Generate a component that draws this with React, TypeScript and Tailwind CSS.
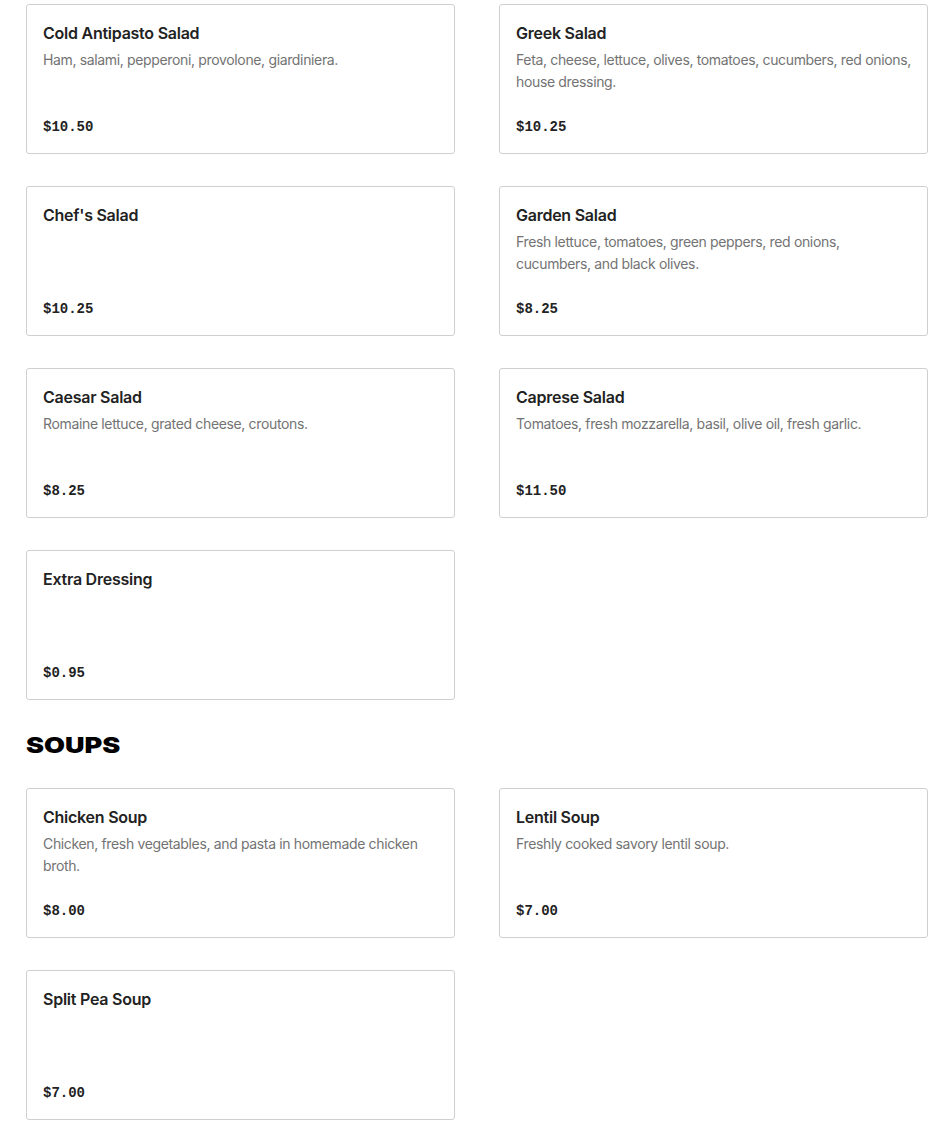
import React from "react";

type Item = { name: string; desc?: string; price: string };

const salads: Item[] = [
  { name: "Cold Antipasto Salad", desc: "Ham, salami, pepperoni, provolone, giardiniera.", price: "$10.50" },
  { name: "Greek Salad", desc: "Feta, cheese, lettuce, olives, tomatoes, cucumbers, red onions,\nhouse dressing.", price: "$10.25" },
  { name: "Chef's Salad", price: "$10.25" },
  { name: "Garden Salad", desc: "Fresh lettuce, tomatoes, green peppers, red onions,\ncucumbers, and black olives.", price: "$8.25" },
  { name: "Caesar Salad", desc: "Romaine lettuce, grated cheese, croutons.", price: "$8.25" },
  { name: "Caprese Salad", desc: "Tomatoes, fresh mozzarella, basil, olive oil, fresh garlic.", price: "$11.50" },
  { name: "Extra Dressing", price: "$0.95" },
];

const soups: Item[] = [
  { name: "Chicken Soup", desc: "Chicken, fresh vegetables, and pasta in homemade chicken\nbroth.", price: "$8.00" },
  { name: "Lentil Soup", desc: "Freshly cooked savory lentil soup.", price: "$7.00" },
  { name: "Split Pea Soup", price: "$7.00" },
];

function Card({ item }: { item: Item }) {
  return (
    <div className="flex h-[150px] flex-col rounded-[3px] border border-[#cfcfcf] bg-white px-4 pt-4 pb-4">
      <div className="text-[16px] leading-[24px] font-semibold tracking-[-0.25px] text-[#222]">{item.name}</div>
      {item.desc && (
        <div className="mt-[4px] whitespace-pre-line text-[14px] leading-[22px] tracking-[-0.35px] text-[#737373]">
          {item.desc}
        </div>
      )}
      <div className="mt-auto font-['Liberation_Mono',monospace] text-[14px] leading-[20px] font-bold text-[#222]">
        {item.price}
      </div>
    </div>
  );
}

export default function App() {
  return (
    <div className="min-h-[1126px] bg-white font-['Inter','Noto_Sans',sans-serif]">
      <div className="ml-[26px] w-[902px] pt-[4px]">
        <div className="grid grid-cols-2 gap-x-[44px] gap-y-[32px]">
          {salads.map((s) => (
            <Card key={s.name} item={s} />
          ))}
        </div>
        <h2 className="mt-[29px] mb-[27px] w-fit origin-left scale-x-[1.23] text-[22px] leading-[32px] font-black text-black">
          SOUPS
        </h2>
        <div className="grid grid-cols-2 gap-x-[44px] gap-y-[32px]">
          {soups.map((s) => (
            <Card key={s.name} item={s} />
          ))}
        </div>
      </div>
    </div>
  );
}
